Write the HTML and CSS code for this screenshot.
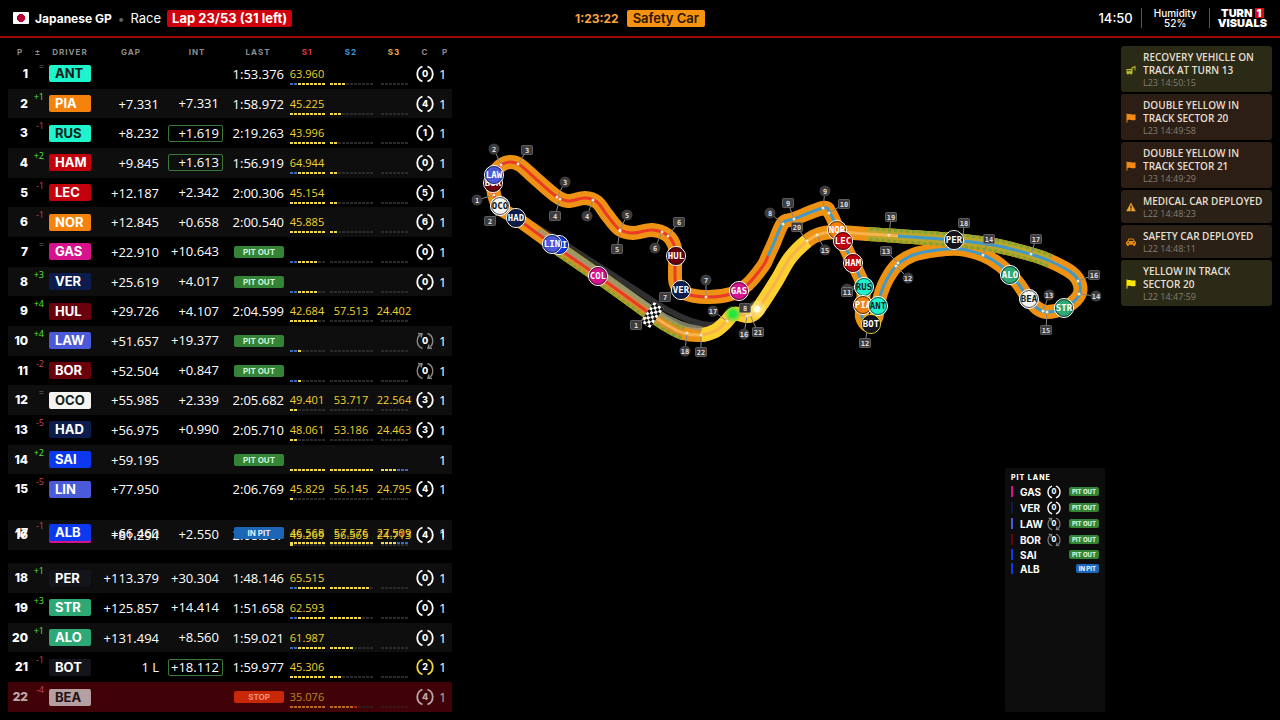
FILE: index.html
```html
<!DOCTYPE html>
<html lang="en">

<head>
  <meta charset="UTF-8">
  <meta name="viewport" content="width=device-width, initial-scale=1.0">
  <title>Japanese GP - Race</title>
  <link rel="stylesheet" href="styles.css">
</head>

<body>
  <header class="topbar">
    <div class="session">
      <span class="flag"></span>
      <h1 class="event-name">Japanese GP</h1>
      <span class="separator">•</span>
      <span class="session-name">Race</span>
      <span class="lap-badge">Lap 23/53 (31 left)</span>
    </div>
    <div class="race-state">
      <span class="race-clock">1:23:22</span>
      <span class="state-badge">Safety Car</span>
    </div>
    <div class="conditions">
      <span class="local-time">14:50</span>
      <div class="weather">
        <div>Humidity</div>
        <div>52%</div>
      </div>
      <div class="brand">
        <div>TURN <span class="brand-one">1</span></div>
        <div>VISUALS</div>
      </div>
    </div>
  </header>

  <main class="layout">
    <section class="timing">
      <table class="timing-table">
        <colgroup>
          <col class="col-pos">
          <col class="col-change">
          <col class="col-driver">
          <col class="col-gap">
          <col class="col-int">
          <col class="col-last">
          <col class="col-s1">
          <col class="col-s2">
          <col class="col-s3">
          <col class="col-tyre">
          <col class="col-pits">
        </colgroup>
        <thead>
          <tr>
            <th>P</th>
            <th>±</th>
            <th>DRIVER</th>
            <th>GAP</th>
            <th>INT</th>
            <th>LAST</th>
            <th class="head-s1">S1</th>
            <th class="head-s2">S2</th>
            <th class="head-s3">S3</th>
            <th>C</th>
            <th>P</th>
          </tr>
        </thead>
        <tbody id="timingBody"></tbody>
      </table>
    </section>

    <section class="map">
      <svg class="track" id="track" viewBox="460 38 653 682" preserveAspectRatio="xMidYMin meet">
        <defs>
          <pattern id="checker" width="6" height="6" patternUnits="userSpaceOnUse">
            <rect width="6" height="6" fill="#111" />
            <rect width="3" height="3" fill="#fff" />
            <rect x="3" y="3" width="3" height="3" fill="#fff" />
          </pattern>
          <radialGradient id="greenGlow">
            <stop offset="0.3" stop-color="#22e83c" />
            <stop offset="1" stop-color="#22e83c" stop-opacity="0" />
          </radialGradient>
          <radialGradient id="whiteGlow">
            <stop offset="0.3" stop-color="#fffbe0" />
            <stop offset="0.5" stop-color="#fff3b0" stop-opacity="0.5" />
            <stop offset="1" stop-color="#fff3b0" stop-opacity="0.2" />
          </radialGradient>
        </defs>
      </svg>

      <aside class="pit-lane">
        <h2 class="pit-title">PIT LANE</h2>
        <ul class="pit-list" id="pitList"></ul>
      </aside>
    </section>

    <ul class="messages">
      <li class="message message-yellow">
        <svg class="message-icon" viewBox="0 0 10 10">
          <path d="M0.500 4h5V2.600L9.500 0.800v4.700h-1V2.500L6.500 3.400V8H0.500zM1.500 5v1.300h1.300V5zM3.500 5v1.300h1.300V5z" fill="#b9bd2c" fill-rule="evenodd" />
          <circle cx="2" cy="8.300" r="1.200" fill="#b9bd2c" />
          <circle cx="5" cy="8.300" r="1.200" fill="#b9bd2c" />
        </svg>
        <div>
          <div class="message-text">RECOVERY VEHICLE ON TRACK AT TURN 13</div>
          <div class="message-time">L23 14:50:15</div>
        </div>
      </li>
      <li class="message message-orange">
        <svg class="message-icon" viewBox="0 0 10 10">
          <path d="M0.500 0.500h1v0.800c2.500-1 4 1 8 0v5.700c-4 1-5.500-1-8 0v2.500h-1z" fill="#f58a14" />
        </svg>
        <div>
          <div class="message-text">DOUBLE YELLOW IN TRACK SECTOR 20</div>
          <div class="message-time">L23 14:49:58</div>
        </div>
      </li>
      <li class="message message-orange">
        <svg class="message-icon" viewBox="0 0 10 10">
          <path d="M0.500 0.500h1v0.800c2.500-1 4 1 8 0v5.700c-4 1-5.500-1-8 0v2.500h-1z" fill="#f58a14" />
        </svg>
        <div>
          <div class="message-text">DOUBLE YELLOW IN TRACK SECTOR 21</div>
          <div class="message-time">L23 14:49:29</div>
        </div>
      </li>
      <li class="message message-amber">
        <svg class="message-icon" viewBox="0 0 10 10">
          <path d="M5 0.600L9.800 9.300H0.200zM4.400 3.500v3h1.200v-3zM4.400 7.200v1.200h1.200V7.200z" fill="#f0a030" fill-rule="evenodd" />
        </svg>
        <div>
          <div class="message-text">MEDICAL CAR DEPLOYED</div>
          <div class="message-time">L22 14:48:23</div>
        </div>
      </li>
      <li class="message message-amber">
        <svg class="message-icon" viewBox="0 0 10 10">
          <path d="M2.600 1.500h4.800l1.200 2.500L10 5v2.500H9V9H7.300V7.800H2.700V9H1V7.500H0V5l1.400-1zM3.200 2.500L2.500 4h5l-0.700-1.500zM1.500 5.200v1h1.500v-1zM7 5.200v1h1.500v-1z" fill="#e88a10" fill-rule="evenodd" />
        </svg>
        <div>
          <div class="message-text">SAFETY CAR DEPLOYED</div>
          <div class="message-time">L22 14:48:11</div>
        </div>
      </li>
      <li class="message message-yellow">
        <svg class="message-icon" viewBox="0 0 10 10">
          <path d="M0.500 0.500h1v0.800c2.500-1 4 1 8 0v5.700c-4 1-5.500-1-8 0v2.500h-1z" fill="#ffe600" />
        </svg>
        <div>
          <div class="message-text">YELLOW IN TRACK SECTOR 20</div>
          <div class="message-time">L22 14:47:59</div>
        </div>
      </li>
    </ul>
  </main>

  <script src="timing.js"></script>
</body>

</html>
```
FILE: styles.css
```css
* {
  margin: 0;
  padding: 0;
  box-sizing: border-box;
}

body {
  font-family: 'Open Sans', 'Noto Sans', sans-serif;
  background: #000;
  color: #fff;
  height: 100vh;
  display: flex;
  flex-direction: column;
  overflow: hidden;
}

ul {
  list-style: none;
}

/* Header */
.topbar {
  flex: none;
  display: grid;
  grid-template-columns: 1fr auto 1fr;
  align-items: center;
  height: 38px;
  padding: 0 13px;
  border-bottom: 2px solid #9c0808;
  font-family: 'Inter', sans-serif;
}

.session,
.race-state,
.conditions {
  display: flex;
  align-items: center;
}

.session {
  gap: 6px;
}

.flag {
  width: 16px;
  height: 12px;
  border-radius: 1px;
  background: radial-gradient(circle, #b8002e 0 4px, #fff 4px);
}

.event-name {
  font-size: 12px;
  font-weight: 700;
}

.separator {
  color: #666;
  font-size: 12px;
}

.session-name {
  font-size: 13px;
}

.lap-badge {
  padding: 0 5px;
  border-radius: 2px;
  background: #d0000c;
  font-size: 13px;
  font-weight: 700;
  line-height: 17px;
}

.race-state {
  gap: 8px;
}

.race-clock {
  color: #f7a440;
  font-size: 12px;
  font-weight: 700;
}

.state-badge {
  padding: 0 6px;
  border-radius: 2px;
  background: #f59311;
  color: #2a1500;
  font-size: 13px;
  font-weight: 600;
  line-height: 17px;
}

.conditions {
  justify-content: flex-end;
}

.local-time {
  padding-right: 8px;
  font-size: 13px;
  font-weight: 500;
}

.weather {
  padding: 0 12px;
  border-left: 1px solid #555;
  border-right: 1px solid #555;
  font-size: 10px;
  font-weight: 500;
  line-height: 10px;
  text-align: center;
}

.brand {
  padding-left: 8px;
  font-size: 11px;
  font-weight: 900;
  line-height: 10px;
  text-align: center;
}

.brand-one {
  display: inline-block;
  padding: 0 2px;
  background: #e10613;
}

.layout {
  flex: 1;
  min-height: 0;
  display: flex;
  gap: 8px;
  padding: 0 8px;
}

/* Timing table */
.timing {
  flex: none;
  padding: 8px 0;
}

.timing-table {
  table-layout: fixed;
  width: 444px;
  height: 100%;
  border-collapse: collapse;
  white-space: nowrap;
}

.col-pos {
  width: 24px;
}

.col-change {
  width: 12px;
}

.col-driver {
  width: 52px;
}

.col-gap {
  width: 70px;
}

.col-int {
  width: 62px;
}

.col-last {
  width: 60px;
}

.col-s1 {
  width: 38px;
}

.col-s2 {
  width: 50px;
}

.col-s3 {
  width: 36px;
}

.col-tyre {
  width: 26px;
}

.col-pits {
  width: 14px;
}

.timing-table th {
  height: 13px;
  color: #8c8c8c;
  font-family: 'Inter', sans-serif;
  font-size: 8px;
  font-weight: 700;
  letter-spacing: 1px;
  line-height: 13px;
  text-align: center;
}

.timing-table .head-s1 {
  color: #e03c48;
}

.timing-table .head-s2 {
  color: #3c9be0;
}

.timing-table .head-s3 {
  color: #f0b050;
}

.timing-table td {
  font-size: 13px;
  font-weight: 500;
  line-height: 18px;
  vertical-align: middle;
}

.timing-table tbody tr:nth-child(even) {
  background: #0e0e0e;
}

.timing-table .moving-down {
  transform: translateY(16px);
}

.timing-table .moving-up {
  position: relative;
  transform: translateY(-16px);
}

.timing-table tbody tr.stopped {
  background: #400207;
}

.stopped .pos > *,
.stopped .driver > *,
.stopped .sector > *,
.stopped .tyre-cell > *,
.stopped .pits > * {
  opacity: 0.65;
}

.timing-table .pos {
  padding-right: 4px;
  font-family: 'Inter', sans-serif;
  font-size: 12px;
  font-weight: 800;
  text-align: right;
}

.timing-table .change {
  color: #777;
  font-size: 9px;
  line-height: 16px;
  text-align: right;
  direction: rtl;
  vertical-align: top;
}

.timing-table .gained {
  color: #54e83c;
}

.timing-table .lost {
  color: #cc445e;
}

.driver {
  padding-left: 5px;
}

.driver-code {
  display: block;
  width: 42px;
  padding-left: 6px;
  border-radius: 2px;
  font-family: 'Inter', sans-serif;
  font-size: 13px;
  font-weight: 700;
  line-height: 17px;
}

.stopped .driver-code {
  background: #ffdce0;
}

.gap {
  padding-right: 7px;
  text-align: right;
}

.int {
  padding-right: 5px;
  text-align: right;
}

.int span {
  display: block;
  width: 55px;
  margin-left: auto;
  padding-right: 3px;
  border: 1px solid transparent;
  border-radius: 2px;
  line-height: 15px;
}

.int .close {
  border-color: #3a7a36;
}

.last {
  padding-right: 4px;
  text-align: right;
}

.badge {
  display: block;
  border-radius: 2px;
  background: #338436;
  color: #d8f5d8;
  font-family: 'Inter', sans-serif;
  font-size: 8px;
  font-weight: 700;
  line-height: 12px;
  text-align: center;
}

.last .badge {
  width: 50px;
  margin-left: auto;
}

.badge-in {
  background: #1c66b8;
  color: #e4f0ff;
}

.badge-stop {
  background: #c82808;
  color: #ee9080;
}

.sector {
  padding-top: 2px;
  text-align: center;
}

.sector-time {
  height: 18px;
  color: #f2d22e;
  font-size: 11px;
  font-weight: 400;
}

.minis {
  display: flex;
  gap: 1px;
  justify-content: center;
}

.mini {
  width: 3px;
  height: 2px;
  background: #2a2a2a;
}

.mini-y {
  background: #f2d84e;
}

.mini-b {
  background: #3c6ab8;
}

.mini-r {
  background: #f03030;
}

.stopped .mini-y {
  background: #f7a03c;
}

.tyre-cell {
  text-align: center;
}

.tyre {
  display: block;
  width: 18px;
  height: 18px;
  margin: 0 auto;
}

.tyre text {
  fill: #fff;
  font-family: 'Inter', sans-serif;
  font-size: 9px;
  font-weight: 800;
  text-anchor: middle;
}

.pits {
  padding-left: 1px;
}

/* Track map */
.map {
  flex: 1;
  min-width: 0;
  position: relative;
}

.track {
  display: block;
  width: 100%;
  height: 100%;
}

.track text {
  font-family: 'DejaVu Sans Mono', monospace;
  font-weight: 700;
  text-anchor: middle;
}

.track .car-name {
  font-size: 9px;
}

.track .marker-name {
  fill: #ddd;
  font-size: 7px;
}

/* Pit lane panel, on top of the map */
.pit-lane {
  position: absolute;
  top: 63%;
  right: 8px;
  bottom: 8px;
  width: 100px;
  padding: 6px;
  border-radius: 2px;
  background: #0d0d0d;
  font-family: 'Inter', sans-serif;
}

.pit-title {
  margin-bottom: 2px;
  font-size: 7px;
  font-weight: 800;
  letter-spacing: 1px;
  line-height: 8px;
}

.pit-row {
  display: flex;
  align-items: center;
  height: 16px;
}

.pit-row.no-tyre {
  height: 14px;
}

.pit-color {
  width: 2px;
  height: 11px;
  margin-right: 7px;
}

.pit-code {
  width: 27px;
  font-size: 10px;
  font-weight: 700;
}

.pit-row .tyre {
  width: 14px;
  height: 14px;
  margin: 0;
}

.pit-row .badge {
  margin-left: auto;
  padding: 0 3px;
  font-size: 6px;
  font-weight: 800;
  line-height: 9px;
}

/* Race control messages */
.messages {
  flex: none;
  width: 151px;
  display: flex;
  flex-direction: column;
  gap: 2px;
  padding-top: 8px;
}

.message {
  display: flex;
  align-items: center;
  gap: 7px;
  padding: 5px 4px 4px 5px;
  border-radius: 3px;
}

.message-yellow {
  background: #2b2a17;
}

.message-orange {
  background: #2c1e14;
}

.message-amber {
  background: #2a2016;
}

.message-icon {
  flex: none;
  width: 10px;
  height: 10px;
}

.message-text {
  color: #e6dfd0;
  font-size: 10px;
  font-weight: 600;
  line-height: 13px;
}

.message-time {
  color: #857e70;
  font-size: 9px;
  line-height: 11px;
}
```
FILE: timing.js
```javascript
const TEAM_COLORS = {
  ANT: '#1ef5cc', RUS: '#1ef5cc', PIA: '#f5820c', NOR: '#f5820c',
  HAM: '#c4000c', LEC: '#c4000c', GAS: '#d6128c', COL: '#d6128c',
  VER: '#0c1c4c', HAD: '#0c1c4c', HUL: '#6a000c', BOR: '#6a000c',
  LAW: '#4a5ad8', LIN: '#4a5ad8', OCO: '#f4f4f2', BEA: '#f4f4f2',
  SAI: '#0c38f0', ALB: '#0c38f0', PER: '#14141c', BOT: '#14141c',
  STR: '#2ea874', ALO: '#2ea874'
};
const DARK_TEXT = ['ANT', 'RUS', 'OCO', 'BEA'];
const MINI_COUNTS = [9, 11, 7];

// change, code, gap, int, last, sector times, mini sectors, tyre
const rows = [
  ['=', 'ANT', '', '', '1:53.376', ['63.960'], ['bbyyyyyyy', 'yyyy'], '0'],
  ['+1', 'PIA', '+7.331', '+7.331', '1:58.972', ['45.225'], ['yyyyyyyyy', 'yyy'], '4'],
  ['-1', 'RUS', '+8.232', '+1.619', '2:19.263', ['43.996'], ['yyyyyyyyy', 'yy'], '1'],
  ['+2', 'HAM', '+9.845', '+1.613', '1:56.919', ['64.944'], ['bbyyyyyyy', 'yy'], '0'],
  ['-1', 'LEC', '+12.187', '+2.342', '2:00.306', ['45.154'], ['yyyyyyyyy', 'yy'], '5'],
  ['-1', 'NOR', '+12.845', '+0.658', '2:00.540', ['45.885'], ['yyyyyyyyy', 'yy'], '6'],
  ['=', 'GAS', '+22.910', '+10.643', 'PIT OUT', [], ['bbyyyyy'], '0'],
  ['+3', 'VER', '+25.619', '+4.017', 'PIT OUT', [], ['bbyyyyy'], '0'],
  ['+4', 'HUL', '+29.726', '+4.107', '2:04.599', ['42.684', '57.513', '24.402'], ['yyyyyyy'], ''],
  ['+4', 'LAW', '+51.657', '+19.377', 'PIT OUT', [], ['bby'], '0'],
  ['-2', 'BOR', '+52.504', '+0.847', 'PIT OUT', [], ['bby'], '0'],
  ['=', 'OCO', '+55.985', '+2.339', '2:05.682', ['49.401', '53.717', '22.564'], ['yy'], '3'],
  ['-5', 'HAD', '+56.975', '+0.990', '2:05.710', ['48.061', '53.186', '24.463'], ['yy'], '3'],
  ['+2', 'SAI', '+59.195', '', 'PIT OUT', [], ['yyyyyyyyy', 'yyyyyyyyyyy', 'yyyybbb'], ''],
  ['-5', 'LIN', '+77.950', '', '2:06.769', ['45.829', '56.145', '24.795'], ['y'], '4'],
  ['', 'COL', '+81.294', '+2.550', '2:08.307', ['45.269', '56.565', '24.713'], ['y'], '4'],
  ['-1', 'ALB', '+66.460', '', 'IN PIT', ['46.568', '57.576', '27.509'], ['yyyyyyyyy', 'yyyyyyyyyyy', 'yyyybbb'], ''],
  ['+1', 'PER', '+113.379', '+30.304', '1:48.146', ['65.515'], ['bbyyyyyyy', 'yyyyyyyyyy'], '0'],
  ['+3', 'STR', '+125.857', '+14.414', '1:51.658', ['62.593'], ['bbyyyyyyy', 'yyyyyyyy'], '0'],
  ['+1', 'ALO', '+131.494', '+8.560', '1:59.021', ['61.987'], ['bbyyyyyyy', 'yyyyyy'], '0'],
  ['-1', 'BOT', '1 L', '+18.112', '1:59.977', ['45.306'], ['yyyyyyyyy', 'yyy'], '2'],
  ['-4', 'BEA', '', '', 'STOP', ['35.076'], ['yyyyyyyyy', 'yyyyyyr'], '4']
];

const BADGES = { 'PIT OUT': '', 'IN PIT': 'badge-in', 'STOP': 'badge-stop' };

function textColor(code) {
  return DARK_TEXT.includes(code) ? '#10201c' : '#fff';
}

function tyre(age, code) {
  if (age === '') return '';
  const used = code === 'LAW' || code === 'BOR';
  const color = used ? '#888' : code === 'BOT' ? '#f0d832' : '#fff';
  const arrows = used ? '<path d="M2 1.500l4 0.500-1 3.500M16 16.500l-4-0.500 1-3.500"/>' : '';
  return `<svg class="tyre" viewBox="0 0 18 18">
    <g fill="none" stroke="${color}" stroke-width="${used ? 1.4 : 1.8}">
      <path d="M6.500 1.500a8 8 0 0 0 0 15M11.500 1.500a8 8 0 0 1 0 15"/>${arrows}
    </g>
    <text x="9" y="12.200">${age}</text>
  </svg>`;
}

function sector(index, times, minis) {
  const colors = minis[index] || '';
  let cells = '';
  for (let i = 0; i < MINI_COUNTS[index]; i++) {
    cells += `<i class="mini ${colors[i] ? 'mini-' + colors[i] : ''}"></i>`;
  }
  return `<td class="sector"><div class="sector-time">${times[index] || ''}</div><div class="minis">${cells}</div></td>`;
}

function renderTiming() {
  document.getElementById('timingBody').innerHTML = rows.map((row, i) => {
    const [change, code, gap, int, last, times, minis, age] = row;
    const changeClass = change[0] === '+' ? 'gained' : change[0] === '-' ? 'lost' : '';
    const rowClass = { COL: 'moving-down', ALB: 'moving-up', BEA: 'stopped' }[code] || '';
    const close = ['RUS', 'HAM', 'BOT'].includes(code) ? 'close' : '';
    const lastCell = last in BADGES ? `<span class="badge ${BADGES[last]}">${last}</span>` : last;
    const pits = code === 'HUL' ? '' : '1';
    return `<tr class="${rowClass}">
      <td class="pos"><span>${i + 1}</span></td>
      <td class="change ${changeClass}"><bdi>${change}</bdi></td>
      <td class="driver"><span class="driver-code" style="background:${TEAM_COLORS[code]};color:${textColor(code)}">${code}</span></td>
      <td class="gap">${gap}</td>
      <td class="int"><span class="${close}">${int}</span></td>
      <td class="last">${lastCell}</td>
      ${[0, 1, 2].map(s => sector(s, times, minis)).join('')}
      <td class="tyre-cell">${tyre(age, code)}</td>
      <td class="pits"><span>${pits}</span></td>
    </tr>`;
  }).join('');
}

function renderPitLane() {
  const cars = [['GAS', '0'], ['VER', '0'], ['LAW', '0'], ['BOR', '0'], ['SAI', ''], ['ALB', '']];
  document.getElementById('pitList').innerHTML = cars.map(([code, age]) => {
    const status = code === 'ALB' ? 'IN PIT' : 'PIT OUT';
    return `<li class="pit-row ${age ? '' : 'no-tyre'}">
      <span class="pit-color" style="background:${TEAM_COLORS[code]}"></span>
      <span class="pit-code">${code}</span>
      ${tyre(age, code)}
      <span class="badge ${BADGES[status]}">${status}</span>
    </li>`;
  }).join('');
}

// Centre line, from the finish line round the lap
const line = [
  [652, 315], [598, 276], [552, 244], [516, 218], [500, 208], [494, 194], [493, 177], [500, 166],
  [510, 162], [520, 165], [537, 180], [556, 196], [568, 201], [585, 198], [597, 202], [607, 215],
  [619, 229], [633, 233], [652, 230], [667, 235], [675, 248], [675, 270], [676, 284], [684, 293],
  [707, 297], [731, 294], [747, 285], [763, 266], [768, 256], [774, 243], [783, 223], [794, 219],
  [823, 208], [830, 213], [837, 228], [843, 242], [853, 263], [863, 285], [863, 303], [862, 317],
  [868, 325], [876, 318], [878, 306], [881, 293], [887, 279], [897, 265], [913, 255], [937, 250],
  [960, 249], [983, 255], [1000, 265], [1017, 282], [1028, 298], [1037, 308], [1047, 312], [1064, 308],
  [1078, 297], [1080, 285], [1072, 273], [1050, 261], [1030, 254], [993, 245], [954, 240], [898, 236],
  [868, 234], [837, 232], [820, 234], [807, 241], [790, 258], [777, 280], [763, 302], [755, 313],
  [748, 316], [734, 314], [725, 323], [715, 331], [701, 335], [683, 333], [667, 325], [652, 315]
];

function smooth(points, from, to) {
  const at = i => points[Math.max(0, Math.min(points.length - 1, i))];
  let d = `M${at(from)}`;
  for (let i = from; i < to; i++) {
    const [a, b, c, e] = [at(i - 1), at(i), at(i + 1), at(i + 2)];
    d += `C${b[0] + (c[0] - a[0]) / 6},${b[1] + (c[1] - a[1]) / 6} ${c[0] - (e[0] - b[0]) / 6},${c[1] - (e[1] - b[1]) / 6} ${c}`;
  }
  return d;
}

function stroke(d, color, width, extra = '') {
  return `<path d="${d}" fill="none" stroke="${color}" stroke-width="${width}" stroke-linejoin="round" ${extra}/>`;
}

// x, y, label, then the point of the track it belongs to
const turns = [
  [477, 200, 1, 494, 195], [494, 149, 2, 501, 165], [565, 182, 3, 557, 197], [587, 216, 4, 593, 200],
  [627, 215, 5, 620, 230], [655, 248, 6, 662, 232], [706, 280, 7, 706, 297], [770, 213, 8, 783, 224],
  [825, 191, 9, 823, 208], [847, 289, 11, 858, 285], [908, 278, 12, 896, 266], [1049, 295, 13, 1043, 311],
  [1096, 296, 14, 1079, 294], [825, 250, 15, 817, 235], [744, 334, 16, 747, 316], [713, 311, 17, 727, 321],
  [685, 351, 18, 687, 333]
];
const sectors = [
  [636, 325, 1, 645, 318], [490, 221, 2, 500, 212], [527, 150, 3, 518, 164], [555, 216, 4, 560, 199],
  [617, 249, 5, 620, 231], [679, 222, 6, 668, 236], [665, 297, 7, 675, 288], [745, 308, 8, 745, 308],
  [788, 203, 9, 794, 219], [844, 204, 10, 829, 213], [847, 292, 11, 858, 287], [865, 343, 12, 868, 326],
  [886, 251, 13, 898, 263], [989, 239, 14, 983, 255], [1046, 330, 15, 1047, 312], [1094, 275, 16, 1078, 281],
  [1036, 239, 17, 1031, 254], [964, 223, 18, 963, 241], [891, 217, 19, 889, 235], [797, 227, 20, 807, 241],
  [758, 332, 21, 750, 315], [701, 352, 22, 701, 335]
];
const cars = [
  ['BOR', 493, 183], ['LAW', 494, 175], ['OCO', 500, 206], ['HAD', 516, 218], ['SAI', 559, 245],
  ['LIN', 552, 244], ['COL', 598, 276], ['HUL', 676, 256], ['VER', 681, 290], ['GAS', 739, 291],
  ['NOR', 837, 230], ['LEC', 843, 241], ['HAM', 853, 263], ['RUS', 864, 287], ['PIA', 863, 305],
  ['ANT', 878, 306], ['BOT', 871, 324], ['PER', 954, 240], ['ALO', 1010, 275], ['BEA', 1029, 299],
  ['STR', 1064, 308]
];

function renderTrack() {
  const end = line.length - 1;
  const pitRoad = 'M532 224L560 241L653 301Q680 319 702 324Q716 327 724 319';
  let svg = stroke(pitRoad, '#303030', 6);
  svg += stroke(smooth(line, 0, end), '#ee9214', 14);
  svg += stroke(smooth(line, 67, 76), '#fbd130', 14);

  // Overtake zones
  for (const [from, to] of [[0, 2], [59, 64], [77, end]]) {
    svg += stroke(smooth(line, from, to), '#b5a222', 14);
    svg += stroke(smooth(line, from, to), '#7ca434', 14, 'stroke-dasharray="3 3"');
    svg += stroke(smooth(line, from, to), from === 59 ? '#bba62c' : '#d68d2c', 8);
  }
  svg += stroke('M538 230L655 310Q680 326 702 329', '#9a967c', 5, 'stroke-opacity="0.8"');

  svg += stroke(smooth(line, 0, 28), '#ea3b26', 3);
  svg += stroke(smooth(line, 28, 63), '#4299c8', 3);
  svg += stroke(smooth(line, 63, end), '#f8b34c', 3);

  svg += '<circle cx="733" cy="314" r="9" fill="url(#greenGlow)"/>';
  svg += '<circle cx="757" cy="309" r="9" fill="url(#whiteGlow)"/>';
  svg += '<rect x="-6" y="-12" width="12" height="24" fill="url(#checker)" transform="translate(652 315) rotate(35)"/>';

  for (const [x, y, , tx, ty] of [...turns, ...sectors]) {
    svg += `<path d="M${x} ${y}L${tx} ${ty}" stroke="#888"/><circle cx="${tx}" cy="${ty}" r="1.500" fill="#f4e8c8"/>`;
  }
  for (const [x, y, name] of turns) {
    svg += `<circle cx="${x}" cy="${y}" r="5.500" fill="#3c3c3e"/><text class="marker-name" x="${x}" y="${y + 2.5}">${name}</text>`;
  }
  for (const [x, y, name] of sectors) {
    svg += `<rect x="${x - 5.5}" y="${y - 4.5}" width="11" height="9" rx="1" fill="#3c3c3e" stroke="#777" stroke-width="0.700"/><text class="marker-name" x="${x}" y="${y + 2.5}">${name}</text>`;
  }
  for (const [code, x, y] of cars) {
    const ring = code === 'BOT' ? '#f0d832' : '#fff';
    svg += `<circle cx="${x}" cy="${y}" r="9.500" fill="${TEAM_COLORS[code]}" stroke="${ring}"/>
      <circle cx="${x}" cy="${y}" r="8.500" fill="none" stroke="#111" stroke-opacity="0.7"/>
      <text class="car-name" x="${x}" y="${y + 3}" fill="${textColor(code)}">${code}</text>`;
  }
  document.getElementById('track').insertAdjacentHTML('beforeend', svg);
}

renderTiming();
renderPitLane();
renderTrack();
```
